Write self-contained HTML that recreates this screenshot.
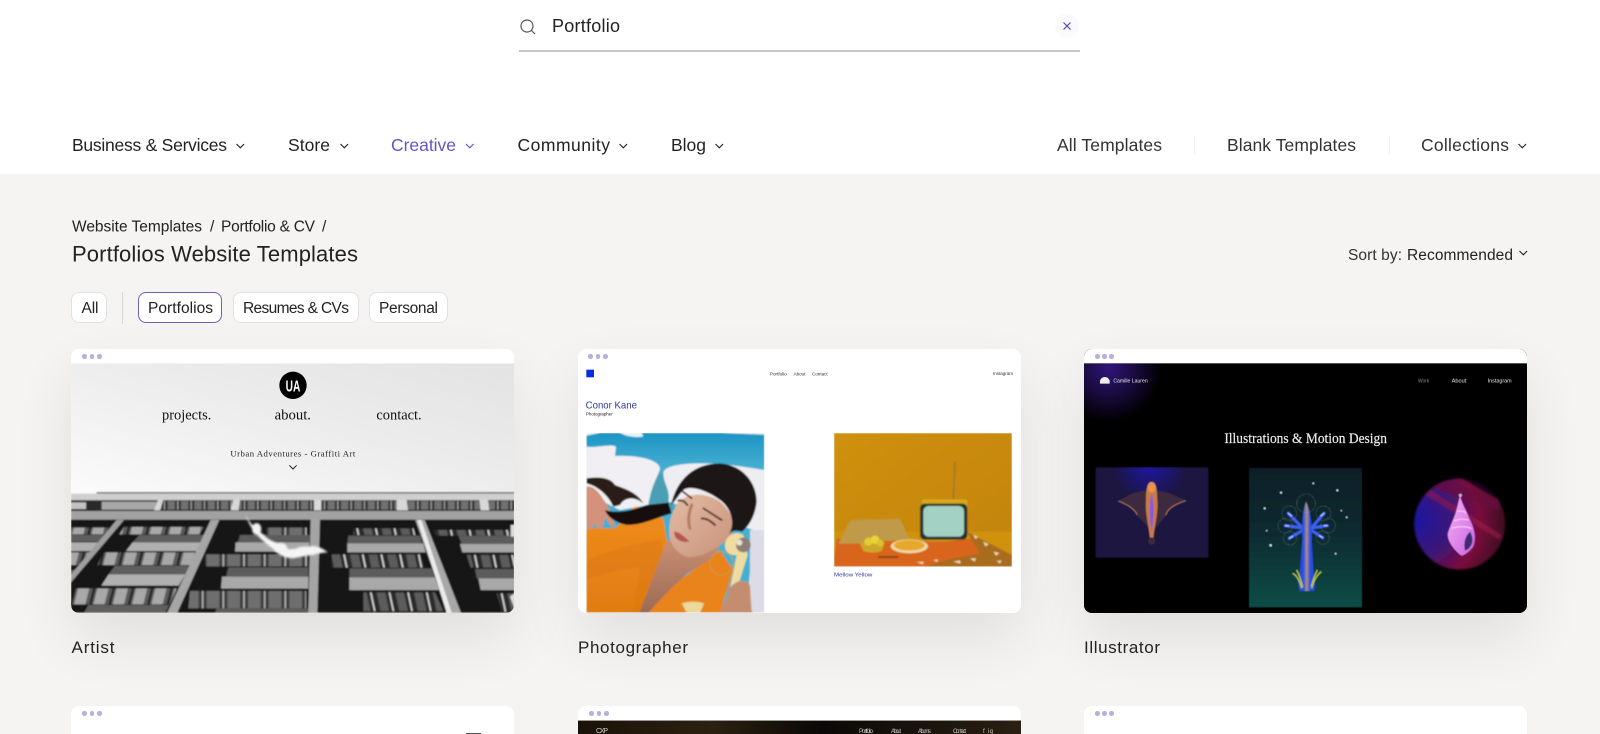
<!DOCTYPE html>
<html lang="en"><head><meta charset="utf-8"><title>Portfolios Website Templates</title>
<style>
html,body{margin:0;padding:0;width:1600px;height:734px;overflow:hidden;background:#f5f4f2;font-family:"Liberation Sans",sans-serif}
#page{position:relative;width:1600px;height:734px;overflow:hidden;background:#f5f4f2}
#head{position:absolute;left:0;top:0;width:1600px;height:174px;background:#fff}
.chip{position:absolute;top:292px;height:29px;background:#fff;border:1px solid #e0e0e5;border-radius:8px}
.card{position:absolute;width:443px;height:264px;background:#fff;border-radius:8px;overflow:hidden}
.shadow{position:absolute;width:443px;height:264px;border-radius:8px;box-shadow:0 26px 60px rgba(0,0,0,.085)}
.r2{height:28px;border-radius:8px 8px 0 0}
.card svg{position:absolute;left:0;top:0}
.d{position:absolute;top:5px;width:4.5px;height:4.5px;border-radius:50%;background:#b9b0e2}
#over{position:absolute;left:0;top:0}
#over text{font-family:"Liberation Sans",sans-serif;fill:#222}
</style></head><body><div id="page">
<div id="head"></div>
<div class="chip" style="left:71px;width:34px"></div>
<div class="chip" style="left:138px;width:82px;border-color:#6b60ba"></div>
<div class="chip" style="left:233px;width:124px"></div>
<div class="chip" style="left:369px;width:77px"></div>
<div class="shadow" style="left:71px;top:349px"></div>
<div class="shadow" style="left:578px;top:349px"></div>
<div class="shadow" style="left:1084px;top:349px"></div>

<!-- card 1 -->
<div class="card" style="left:71px;top:349px">
<svg width="480" height="290" viewBox="0 0 1440 870" style="left:-11px;top:-4px">
<defs>
<linearGradient id="sky" x1="0" y1="1" x2="1" y2="0"><stop offset="0" stop-color="#fbfbfb"/><stop offset=".55" stop-color="#ececec"/><stop offset="1" stop-color="#e3e3e3"/></linearGradient>
<pattern id="w1" width="58" height="60" patternUnits="userSpaceOnUse" patternTransform="skewX(-14)"><rect width="58" height="60" fill="#5a5a5a"/><rect x="4" width="34" height="60" fill="#a8a8a8"/><rect x="50" width="6" height="60" fill="#191919"/></pattern>
<pattern id="w2" width="62" height="60" patternUnits="userSpaceOnUse"><rect width="62" height="60" fill="#3c3c3c"/><rect x="6" width="38" height="60" fill="#6e6e6e"/><rect x="54" width="4" height="60" fill="#c8c8c8"/></pattern>
<pattern id="w3" width="56" height="60" patternUnits="userSpaceOnUse" patternTransform="skewX(12)"><rect width="56" height="60" fill="#2c2c2c"/><rect x="8" width="26" height="60" fill="#5c5c5c"/><rect x="44" width="5" height="60" fill="#dcdcdc"/></pattern>
<pattern id="w4" width="40" height="30" patternUnits="userSpaceOnUse"><rect width="40" height="30" fill="#303030"/><rect x="3" width="22" height="30" fill="#6f6f6f"/><rect x="32" width="3" height="30" fill="#c4c4c4"/></pattern>
<filter id="b1"><feGaussianBlur stdDeviation="2"/></filter>
<filter id="b2"><feGaussianBlur stdDeviation="3"/></filter>
</defs>
<rect width="1440" height="870" fill="#fff"/>
<rect x="33" y="55" width="1330" height="395" fill="url(#sky)"/>
<g filter="url(#b1)">
<rect x="33" y="450" width="1330" height="353" fill="#121212"/>
<rect x="110" y="442" width="1253" height="4" fill="#555"/>
<rect x="33" y="446" width="1330" height="20" fill="#cfcfcf"/>
<rect x="33" y="466" width="1330" height="30" fill="#2a2a2a"/>
<rect x="33" y="472" width="45" height="20" fill="#c2c2c2"/>
<rect x="125" y="470" width="165" height="24" fill="#a8a8a8"/>
<rect x="300" y="468" width="220" height="26" fill="url(#w4)"/>
<rect x="538" y="468" width="226" height="26" fill="url(#w4)"/>
<rect x="785" y="468" width="228" height="26" fill="url(#w4)"/>
<rect x="1038" y="468" width="226" height="26" fill="url(#w4)"/>
<rect x="1286" y="468" width="77" height="26" fill="url(#w4)"/>
<path d="M282 496l12-32h16l-10 32zM512 496l8-32h20l-4 32zM762 496v-32h22v32zM1010 496v-32h30l4 32zM1262 496l-4-32h26l4 32z" fill="#d8d8d8"/>
<rect x="33" y="498" width="1330" height="26" fill="#a2a2a2"/>
<!-- windows -->
<path d="M192 546H432L418 568H178Z" fill="url(#w1)"/>
<path d="M33 548H170L150 568H33Z" fill="url(#w1)"/>
<path d="M130 622H410L392 660H112Z" fill="url(#w1)"/>
<path d="M33 622H92L60 660H33Z" fill="url(#w1)"/>
<path d="M45 730H350L330 778H30Z" fill="url(#w1)"/>
<path d="M620 548H740V570H620Z" fill="url(#w2)"/>
<path d="M436 628H745V664H436Z" fill="url(#w2)"/>
<path d="M390 738H738V790H385Z" fill="url(#w2)"/>
<path d="M880 550H1060L1066 570H880Z" fill="url(#w3)"/>
<path d="M815 628H1082L1094 668H815Z" fill="url(#w3)"/>
<path d="M910 742H1125L1150 798H910Z" fill="url(#w3)"/>
<path d="M1120 555H1350V572H1128Z" fill="url(#w3)"/>
<path d="M1220 630H1363V668H1232Z" fill="url(#w3)"/>
<path d="M1310 745H1363V800H1325Z" fill="url(#w3)"/>
<!-- balconies -->
<path d="M238 570H442L426 592H218ZM165 662H388L376 688H146ZM33 570H142L122 590H33ZM85 780H328L316 803H72ZM33 675H52L33 700Z" fill="#5e5e5e"/>
<path d="M218 592H426L410 618H198ZM146 688H376L356 722H124ZM33 592H120L100 618H33Z" fill="#b0b0b0"/>
<path d="M540 570H750V592H534ZM505 667H745V695H498ZM470 790H745V803H465ZM865 572H1080L1086 595H862ZM868 670H1115L1125 697H868ZM1195 572H1363V597H1205ZM1245 672H1363V700H1250Z" fill="#5c5c5c"/>
<path d="M527 592H748V620H525ZM486 695H745V731H483ZM862 595H1090L1097 622H862ZM868 697H1125L1138 735H868ZM1200 597H1363V622H1207ZM1255 700H1363V735H1262Z" fill="#a8a8a8"/>
<!-- columns -->
<path d="M170 525H192L33 712V688Z" fill="#9e9e9e"/>
<path d="M452 525H478L352 803H322Z" fill="#a6a6a6"/>
<path d="M752 522H780L772 803H745Z" fill="#a4a4a4"/>
<path d="M1066 525H1094L1203 803H1165Z" fill="#a8a8a8"/>
<path d="M1072 525H1084L1175 803H1160Z" fill="#ececec"/>
<path d="M1352 540H1363V575H1352ZM1350 755L1363 745V790Z" fill="#ddd"/>
</g>
<g fill="#f4f4f4" filter="url(#b2)">
<path d="M556 505C565 530 585 550 612 570C630 590 650 590 665 605C690 622 720 605 760 603C780 605 795 615 803 622C770 625 740 632 700 640C670 640 650 625 640 612C610 590 570 560 556 505Z"/>
<ellipse cx="662" cy="610" rx="20" ry="16"/><ellipse cx="740" cy="618" rx="38" ry="14"/><ellipse cx="590" cy="552" rx="14" ry="18"/>
</g>
<g>
<circle cx="699" cy="121" r="41" fill="#000"/>
<text x="677" y="139" font-family="Liberation Sans" font-size="47" font-weight="700" fill="#fff" textLength="44" lengthAdjust="spacingAndGlyphs">UA</text>
<g font-family="Liberation Serif" fill="#111" font-size="44">
<text x="306" y="224" textLength="148" lengthAdjust="spacingAndGlyphs">projects.</text>
<text x="644" y="224" textLength="109" lengthAdjust="spacingAndGlyphs">about.</text>
<text x="949" y="224" textLength="136" lengthAdjust="spacingAndGlyphs">contact.</text>
</g>
<text x="511" y="335" font-family="Liberation Serif" font-size="26" fill="#222" textLength="375">Urban Adventures - Graffiti Art</text>
<path d="M688 361L699 372L710 361" fill="none" stroke="#222" stroke-width="3"/>
</g>
<rect x="0" y="0" width="1440" height="55" fill="#fff"/>
</svg>
<i class="d" style="left:11px"></i><i class="d" style="left:18.5px"></i><i class="d" style="left:26px"></i>
</div>

<!-- card 2 -->
<div class="card" style="left:578px;top:349px">
<svg width="470" height="290" viewBox="0 0 1410 870" style="left:-8px;top:-4px">
<defs>
<linearGradient id="bl" x1="0" y1="0" x2="0" y2="1"><stop offset="0" stop-color="#1c94c4"/><stop offset=".2" stop-color="#45afd1"/></linearGradient>
<linearGradient id="mus" x1="0" y1="0" x2="1" y2="1"><stop offset="0" stop-color="#cf9010"/><stop offset="1" stop-color="#c2830a"/></linearGradient>
<linearGradient id="skin" x1="0" y1="0" x2="0" y2="1"><stop offset="0" stop-color="#c98f74"/><stop offset="1" stop-color="#9c6a54"/></linearGradient>
<linearGradient id="fc" x1="0" y1="0" x2="1" y2="1"><stop offset="0" stop-color="#e4bca4"/><stop offset="1" stop-color="#c8917a"/></linearGradient>
<linearGradient id="or" x1="0" y1="0" x2="0" y2="1"><stop offset="0" stop-color="#ef8c1c"/><stop offset="1" stop-color="#e07c10"/></linearGradient>
<clipPath id="wc"><rect x="19" y="9" width="534" height="539"/></clipPath>
<clipPath id="tc"><rect x="792" y="264" width="534" height="401"/></clipPath>
<filter id="c2"><feGaussianBlur stdDeviation="2.4"/></filter>
</defs>
<text x="47" y="190" font-family="Liberation Sans" font-size="29" fill="#2f3a9e" textLength="154" lengthAdjust="spacingAndGlyphs">Conor Kane</text>
<text x="48" y="212" font-family="Liberation Sans" font-size="13" fill="#222" textLength="80" lengthAdjust="spacingAndGlyphs">Photographer</text>
<rect x="49" y="74" width="23" height="23" fill="#0a2be0"/>
<g font-family="Liberation Sans" font-size="13" fill="#333">
<text x="600" y="91" textLength="50" lengthAdjust="spacingAndGlyphs">Portfolio</text>
<text x="671" y="91" textLength="35" lengthAdjust="spacingAndGlyphs">About</text>
<text x="726" y="91" textLength="47" lengthAdjust="spacingAndGlyphs">Contact</text>
<text x="1269" y="90" textLength="60" lengthAdjust="spacingAndGlyphs">Instagram</text>
</g>
<text x="792" y="694" font-family="Liberation Sans" font-size="17" fill="#2f3a9e" textLength="115" lengthAdjust="spacingAndGlyphs">Mellow Yellow</text>
<g transform="translate(30,255)" clip-path="url(#wc)"><g filter="url(#c2)">
<rect x="19" y="9" width="534" height="539" fill="url(#bl)"/>
<path d="M120 9H185L190 20Q150 25 120 9ZM19 9H60L19 17ZM420 9H553V14Z" fill="#e8f3f7"/>
<path d="M205 130H280V240H205Z" fill="#4b9fb4"/>
<path d="M19 50C50 55 90 40 108 50L105 78C160 75 235 85 240 115C235 140 215 160 205 225L120 240L19 190Z" fill="#f1eff3"/>
<path d="M250 130C250 108 300 100 365 100C440 100 500 112 553 120V548H500L520 300L265 215C272 180 250 160 250 130Z" fill="#eeedf2"/>
<rect x="510" y="300" width="43" height="248" fill="#dcdbe6"/>
<path d="M19 300C30 290 60 295 100 295C130 285 145 235 170 230L200 240L250 265L262 340L180 548H19Z" fill="url(#or)"/>
<path d="M19 395C80 360 160 340 240 330L250 370L190 548H160L180 410C120 420 60 430 19 450Z" fill="#dc7810" opacity=".5"/>
<path d="M262 330L420 350L390 390L320 430L260 500L205 548H178Z" fill="url(#skin)"/>
<path d="M205 548C260 490 300 440 380 395L420 360L460 420L445 470L420 548Z" fill="#e9841a"/>
<path d="M495 470L517 548H490Z" fill="#e98418"/>
<path d="M19 170C40 165 60 190 75 215C90 240 105 270 103 290C95 295 85 280 75 260L70 285C60 300 50 295 45 280L30 300L19 290Z" fill="#d4917b"/>
<path d="M20 145C50 140 90 140 105 165C130 175 170 185 190 220C160 195 130 205 120 225L100 230C90 205 60 170 20 160Z" fill="#2b1c16"/>
<path d="M75 240C105 250 150 245 200 225L265 218L275 250C230 262 190 285 140 285C110 278 85 265 75 240Z" fill="#17100e"/>
<path d="M285 235C300 190 370 180 420 215C460 250 470 290 450 320C420 350 370 385 320 380C290 370 265 340 268 300C268 270 275 250 285 235Z" fill="url(#fc)"/>
<path d="M273 225C290 150 340 100 420 100C490 105 530 160 530 215C525 265 500 295 485 305C470 300 455 300 445 315C470 280 450 230 420 210C380 180 330 165 310 180C295 195 285 215 273 225Z" fill="#1e1412"/>
<g fill="none" stroke-linecap="round">
<path d="M305 182L335 205M370 235L425 270" stroke="#3a2118" stroke-width="5"/>
<path d="M295 212Q310 208 322 225M365 265Q385 265 405 285" stroke="#4d3328" stroke-width="6"/>
<path d="M335 225Q320 265 330 295" stroke="#b07c64" stroke-width="9"/>
</g>
<path d="M282 305Q300 305 328 335Q300 340 285 320Z" fill="#b5574f"/>
<circle cx="425" cy="400" r="35" fill="none" stroke="#c89a4a" stroke-width="3"/>
<path d="M435 340C440 315 470 300 490 315L495 345L503 375L470 480L448 485L470 375C445 378 432 360 435 340Z" fill="#efdca0"/>
<circle cx="490" cy="345" r="22" fill="#8d7f75"/><circle cx="478" cy="338" r="9" fill="#e8e2d2"/>
<path d="M445 480C470 440 510 450 510 470L515 548H420C425 520 445 510 445 480Z" fill="#c58d70"/>
<path d="M305 520Q340 510 372 520L360 548H320Z" fill="#ead99a"/>
</g></g>
<g clip-path="url(#tc)"><g filter="url(#c2)">
<rect x="792" y="264" width="534" height="401" fill="url(#mus)"/>
<path d="M792 560H1326V640L792 640Z" fill="#d09210"/>
<path d="M792 640L800 580L1000 590L1130 590L1200 580L1270 610L1326 640V665H792Z" fill="#d9651a"/>
<path d="M1190 560L1326 630V665H1060L1150 640L1230 625Z" fill="#a86c1c"/>
<path d="M1210 570l14 6-8 6zM1240 590l16 8-10 6zM1270 620l18 4-10 8zM1150 650l20-4 2 10zM1200 640l18 0-4 10zM1040 652l20-2 0 8zM1280 648l14-2-3 10zM1090 645l14-2-3 8z" fill="#eadcb8"/>
<path d="M805 595C830 560 830 530 850 525L990 522C1000 540 1010 570 1018 582C950 585 870 600 805 595Z" fill="#bf9a48"/>
<path d="M868 592H945L935 618Q905 628 880 618Z" fill="#cca82c"/>
<circle cx="895" cy="590" r="12" fill="#e6cc32"/><circle cx="915" cy="584" r="13" fill="#ead238"/><circle cx="930" cy="594" r="10" fill="#dfc22a"/>
<ellipse cx="1018" cy="604" rx="56" ry="21" fill="#edd8a6"/><ellipse cx="1018" cy="601" rx="46" ry="16" fill="#e6a82c"/>
<path d="M925 636H985" stroke="#3a2818" stroke-width="4"/>
<path d="M1155 350L1150 468" stroke="#8a6a28" stroke-width="3"/>
<rect x="1056" y="463" width="136" height="30" rx="4" fill="#d9a81c"/>
<rect x="1050" y="476" width="142" height="108" rx="14" fill="#24342c"/>
<rect x="1060" y="483" width="122" height="92" rx="16" fill="#a3d2c4"/>
</g></g>
<rect x="0" y="0" width="1410" height="55" fill="#fff"/>
</svg>
<i class="d" style="left:10px"></i><i class="d" style="left:17.5px"></i><i class="d" style="left:25px"></i>
</div>

<!-- card 3 -->
<div class="card" style="left:1084px;top:349px;background:#000">
<svg width="480" height="290" viewBox="0 0 1440 870" style="left:-9px;top:-4px">
<defs>
<radialGradient id="pg" gradientUnits="userSpaceOnUse" cx="100" cy="70" r="160"><stop offset="0" stop-color="#30157a"/><stop offset=".55" stop-color="#160a38"/><stop offset="1" stop-color="#000"/></radialGradient>
<radialGradient id="a1" gradientUnits="userSpaceOnUse" cx="150" cy="10" r="115"><stop offset="0" stop-color="#1a1aa8"/><stop offset="1" stop-color="#1c1840"/></radialGradient>
<linearGradient id="a2" x1="0" y1="0" x2="0" y2="1"><stop offset="0" stop-color="#0b1f27"/><stop offset=".45" stop-color="#0b2a30"/><stop offset="1" stop-color="#0c4d47"/></linearGradient>
<radialGradient id="sc" gradientUnits="userSpaceOnUse" cx="950" cy="180" r="270"><stop offset="0" stop-color="#1c12a0"/><stop offset=".4" stop-color="#3c1478"/><stop offset=".7" stop-color="#7a0e3c"/><stop offset="1" stop-color="#3a0820"/></radialGradient>
<linearGradient id="tr" x1="0" y1="0" x2="1" y2="0"><stop offset="0" stop-color="#2346e6"/><stop offset=".3" stop-color="#2a50e6"/><stop offset=".5" stop-color="#b08e80"/><stop offset=".7" stop-color="#2a50e6"/><stop offset="1" stop-color="#2346e6"/></linearGradient>
<linearGradient id="sh" x1="0" y1="0" x2="1" y2="1"><stop offset="0" stop-color="#fab0f0"/><stop offset="1" stop-color="#c866e6"/></linearGradient>
<clipPath id="cc"><circle cx="1079" cy="192" r="137"/></clipPath>
<filter id="c3"><feGaussianBlur stdDeviation="1.2"/></filter>
<filter id="c4"><feGaussianBlur stdDeviation="3"/></filter>
</defs>
<rect width="1440" height="870" fill="#000"/>
<rect x="27" y="55" width="300" height="230" fill="url(#pg)"/>
<path d="M75 107A15 15 0 0 1 104 107V116H75Z" fill="#eee"/>
<g font-family="Liberation Sans" font-size="16" fill="#e6e6e6">
<text x="115" y="112" textLength="103" lengthAdjust="spacingAndGlyphs">Camille Lauren</text>
<text x="1029" y="112" textLength="34" fill="#888" lengthAdjust="spacingAndGlyphs">Work</text>
<text x="1130" y="112" textLength="44" lengthAdjust="spacingAndGlyphs">About</text>
<text x="1238" y="112" textLength="72" lengthAdjust="spacingAndGlyphs">Instagram</text>
</g>
<text x="448" y="294" font-family="Liberation Serif" font-size="44" fill="#eee" stroke="#eee" stroke-width=".5" textLength="488" lengthAdjust="spacingAndGlyphs">Illustrations &amp; Motion Design</text>
<g transform="translate(75,345)"><g filter="url(#c3)">
<rect x="-13" y="22" width="338" height="271" fill="url(#a1)"/>
<path d="M55 123C90 100 120 90 155 92C190 90 225 105 257 122C225 130 205 140 195 170L165 205H148L115 170C105 140 85 130 55 123Z" fill="#3d2c3f"/>
<path d="M55 123C75 132 100 140 112 165M257 122C235 130 205 140 197 165" fill="none" stroke="#d98a62" stroke-width="2"/>
<path d="M155 66C170 66 172 95 172 120C175 160 165 190 160 235H150C145 190 135 160 138 120C138 95 140 66 155 66Z" fill="#c67c45"/>
<path d="M155 100C163 130 163 170 155 215C147 170 147 130 155 100Z" fill="#8a58e0"/>
<ellipse cx="155" cy="82" rx="12" ry="16" fill="#e7944e"/>
<ellipse cx="155" cy="243" rx="10" ry="11" fill="#3c2c3c"/>
<rect x="447" y="24" width="339" height="418" fill="url(#a2)"/>
<g stroke="#3a60ee" stroke-width="9" stroke-linecap="round"><path d="M618 215L565 160M618 205L556 197M618 205L568 235M625 215L672 160M625 205L682 197M625 205L668 233"/></g>
<g stroke="#cfd8ff" stroke-width="3" stroke-linecap="round"><path d="M575 168L565 160M566 198L556 197M578 229L568 235M662 168L672 160M672 197L682 197M658 227L668 233"/></g>
<path d="M618 125C630 150 637 190 635 240L640 330C645 360 648 385 640 393H600C592 380 597 350 600 330L607 240C605 190 608 150 618 125Z" fill="url(#tr)"/>
<path d="M578 340C590 345 600 365 605 385M590 330C598 345 604 365 608 382M664 335C650 345 640 365 635 385M652 330C645 345 638 362 634 380" fill="none" stroke="#b8c634" stroke-width="4"/>
<g fill="none" stroke="#cfe0e0" stroke-width="1.6" stroke-dasharray="1.5 4.5" opacity=".7"><circle cx="618" cy="130" r="28"/><circle cx="568" cy="160" r="22"/><circle cx="556" cy="197" r="22"/><circle cx="570" cy="235" r="20"/><circle cx="670" cy="160" r="22"/><circle cx="684" cy="197" r="22"/><circle cx="668" cy="233" r="20"/></g>
<g fill="#e6f0f0"><circle cx="640" cy="70" r="2.5"/><circle cx="543" cy="98" r="3"/><circle cx="712" cy="91" r="3"/><circle cx="494" cy="145" r="3"/><circle cx="724" cy="152" r="2"/><circle cx="740" cy="172" r="2.5"/><circle cx="500" cy="212" r="2"/><circle cx="512" cy="256" r="3.5"/><circle cx="707" cy="281" r="2.5"/></g>
</g>
<g filter="url(#c4)"><g clip-path="url(#cc)">
<circle cx="1079" cy="192" r="137" fill="url(#sc)"/>
<path d="M985 80L1195 150L1200 120L1040 60Z" fill="#6a1040" opacity=".7"/>
<path d="M1075 50L1216 130V50Z" fill="#06001a" opacity=".85"/>
<path d="M970 100L1200 240L1205 225L990 90Z" fill="#a01a48" opacity=".55"/>
</g></g>
<g filter="url(#c3)">
<path d="M1080 105C1085 130 1100 150 1108 175C1125 205 1130 235 1120 260C1110 275 1095 285 1085 288C1060 270 1040 240 1043 220C1050 195 1065 170 1070 145Z" fill="url(#sh)"/>
<path d="M1110 215C1125 240 1115 265 1095 272C1090 250 1095 230 1110 215Z" fill="#3d2a74"/>
<path d="M1062 182Q1085 175 1105 180M1055 205Q1085 195 1115 205M1070 155Q1085 150 1098 158" fill="none" stroke="#fbd4f8" stroke-width="3"/>
<circle cx="1081" cy="106" r="5" fill="#c8c0d0"/>
</g></g>
<rect x="0" y="0" width="1440" height="55" fill="#fff"/>
</svg>
<i class="d" style="left:11px"></i><i class="d" style="left:18px"></i><i class="d" style="left:25px"></i>
</div>

<!-- row 2 -->
<div class="card r2" style="left:71px;top:706px"><i class="d" style="left:11px"></i><i class="d" style="left:18.5px"></i><i class="d" style="left:26px"></i>
<div style="position:absolute;left:395px;top:27px;width:15px;height:1px;background:#555"></div></div>
<div class="card r2" style="left:578px;top:706px"><i class="d" style="left:11px"></i><i class="d" style="left:18.5px"></i><i class="d" style="left:26px"></i>
<div style="position:absolute;left:0;top:14px;width:443px;height:13px;background:linear-gradient(90deg,#1a1208,#2c2010 30%,#0a0806 55%,#1c150c 80%,#2a2012);border-top:1px solid #999"></div>
<svg width="443" height="28" viewBox="0 0 443 28"><g font-family="Liberation Sans" font-size="6" fill="#ccc"><text x="18" y="27" font-size="7" textLength="12">CXP</text><text x="281" y="27" textLength="14">Portfolio</text><text x="313" y="27" textLength="10">About</text><text x="340" y="27" textLength="13">Albums</text><text x="375" y="27" textLength="13">Contact</text><text x="405" y="27" textLength="10">f  ig</text></g></svg></div>
<div class="card r2" style="left:1084px;top:706px"><i class="d" style="left:11px"></i><i class="d" style="left:18px"></i><i class="d" style="left:25px"></i></div>

<svg id="over" width="1600" height="734" viewBox="0 0 1600 734">
<!-- search -->
<circle cx="527" cy="26" r="6" fill="none" stroke="#555" stroke-width="1.2"/><path d="M531.5 30.5L535 34" stroke="#555" stroke-width="1.2"/>
<text x="552" y="32" font-size="18" textLength="68">Portfolio</text>
<circle cx="1067" cy="26" r="12" fill="#faf9fd"/>
<path d="M1063.5 22.5L1070.5 29.5M1070.5 22.5L1063.5 29.5" stroke="#4f44b0" stroke-width="1.2"/>
<rect x="519" y="50.500" width="561" height="1" fill="#8c8c8c"/>
<!-- nav -->
<g font-size="17.500">
<text x="72" y="151" textLength="155">Business &amp; Services</text>
<text x="288" y="151" textLength="42">Store</text>
<text x="391" y="151" textLength="65" style="fill:#6355c4">Creative</text>
<text x="517.500" y="151" textLength="92.500">Community</text>
<text x="671" y="151" textLength="35">Blog</text>
<text x="1057" y="151" textLength="105" style="fill:#333">All Templates</text>
<text x="1227" y="151" textLength="129" style="fill:#333">Blank Templates</text>
<text x="1421" y="151" textLength="88" style="fill:#333">Collections</text>
</g>
<g fill="none" stroke="#222" stroke-width="1.1">
<path d="M236.500 144l3.800 3.800 3.800-3.800M340.500 144l3.800 3.800 3.800-3.800M619.500 144l3.800 3.800 3.800-3.800M715.500 144l3.800 3.800 3.800-3.800M1518.500 144l3.800 3.800 3.800-3.800M1519.500 251l3.800 3.800 3.800-3.800"/>
<path d="M466 144l3.800 3.800 3.800-3.800" stroke="#6355c4"/>
</g>
<rect x="1194" y="136" width="1" height="18" fill="#f0f0f0"/><rect x="1389" y="136" width="1" height="18" fill="#f0f0f0"/>
<!-- breadcrumb -->
<g font-size="15.500">
<text x="72" y="231.500" textLength="130">Website Templates</text>
<text x="210" y="231.500">/</text>
<text x="221" y="231.500" textLength="94">Portfolio &amp; CV</text>
<text x="322" y="231.500">/</text>
<text x="1348" y="260" textLength="54" style="fill:#333">Sort by:</text>
<text x="1407" y="260" textLength="106">Recommended</text>
<text x="81.500" y="313" textLength="17">All</text>
<text x="148" y="313" textLength="65">Portfolios</text>
<text x="243" y="313" textLength="106">Resumes &amp; CVs</text>
<text x="379" y="313" textLength="59">Personal</text>
</g>
<text x="72" y="261.500" font-size="22" textLength="286">Portfolios Website Templates</text>
<rect x="122" y="292" width="1" height="32" fill="#d8d8d8"/>
<g font-size="17" style="fill:#333">
<text x="71.500" y="653" textLength="43">Artist</text>
<text x="578" y="653" textLength="110">Photographer</text>
<text x="1084" y="653" textLength="76">Illustrator</text>
</g>
</svg>
</div></body></html>
